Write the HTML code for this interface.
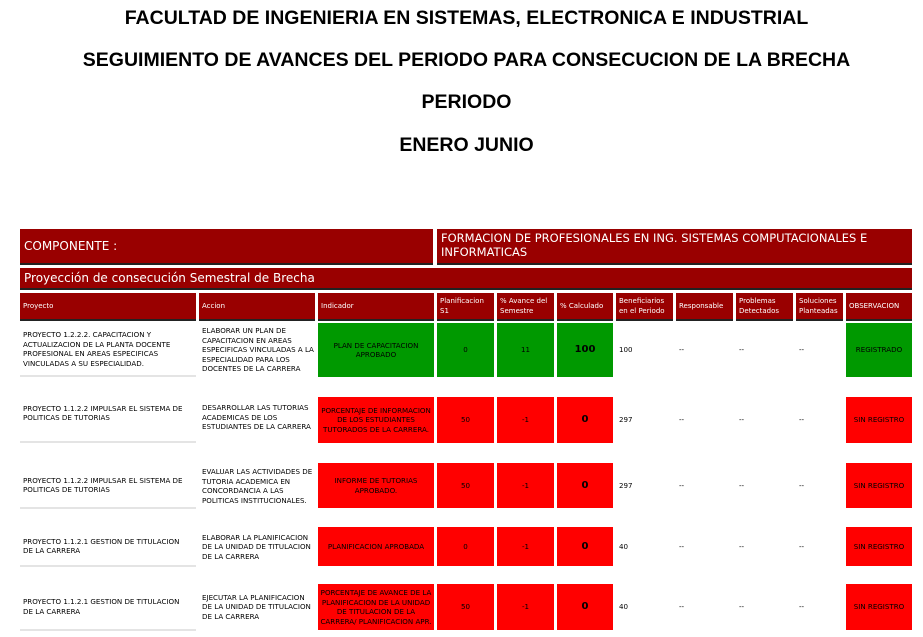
<!DOCTYPE html>
<html><head><meta charset="utf-8"><style>
body{margin:0;width:923px;height:637px;background:#fff;position:relative;overflow:hidden;font-family:"DejaVu Sans","Liberation Sans",sans-serif;}
.t{position:absolute;left:0;width:933px;text-align:center;font:bold 19.5px "Liberation Sans",sans-serif;color:#000}
.b{position:absolute;box-sizing:border-box;}
.h{background:#990000;color:#fff;border-bottom:2px solid #222;}
.hd{font-size:7px;padding:2px 3px;display:flex;align-items:center;line-height:10px}
.c{font-size:7.1px;display:flex;align-items:center;line-height:9.5px;color:#000}
.cc{justify-content:center;text-align:center;padding:0 2px}
.g{background:#009900}.r{background:#ff0000}
.u{border-bottom:2px solid #e4e4e4}
</style></head><body>
<div class="t" style="top:7px">FACULTAD DE INGENIERIA EN SISTEMAS, ELECTRONICA E INDUSTRIAL</div>
<div class="t" style="top:49px">SEGUIMIENTO DE AVANCES DEL PERIODO PARA CONSECUCION DE LA BRECHA</div>
<div class="t" style="top:91px">PERIODO</div>
<div class="t" style="top:134px">ENERO JUNIO</div>

<div class="b h" style="left:20px;top:229px;width:413px;height:36px;font-size:12px;padding:0 4px;display:flex;align-items:center">COMPONENTE :</div>
<div class="b h" style="left:437px;top:229px;width:475px;height:36px;font-size:11.5px;padding:2px 4px;line-height:14px">FORMACION DE PROFESIONALES EN ING. SISTEMAS COMPUTACIONALES E<br>INFORMATICAS</div>
<div class="b h" style="left:20px;top:268px;width:892px;height:22px;font-size:12px;padding:0 4px;display:flex;align-items:center">Proyección de consecución Semestral de Brecha</div>

<div class="b h hd" style="left:20px;top:293px;width:176px;height:28px">Proyecto</div>
<div class="b h hd" style="left:199px;top:293px;width:116px;height:28px">Accion</div>
<div class="b h hd" style="left:318px;top:293px;width:116px;height:28px">Indicador</div>
<div class="b h hd" style="left:437px;top:293px;width:57px;height:28px">Planificacion S1</div>
<div class="b h hd" style="left:497px;top:293px;width:57px;height:28px">% Avance del Semestre</div>
<div class="b h hd" style="left:557px;top:293px;width:56px;height:28px">% Calculado</div>
<div class="b h hd" style="left:616px;top:293px;width:57px;height:28px">Beneficiarios en el Periodo</div>
<div class="b h hd" style="left:676px;top:293px;width:57px;height:28px">Responsable</div>
<div class="b h hd" style="left:736px;top:293px;width:57px;height:28px">Problemas Detectados</div>
<div class="b h hd" style="left:796px;top:293px;width:47px;height:28px">Soluciones Planteadas</div>
<div class="b h hd" style="left:846px;top:293px;width:66px;height:28px">OBSERVACION</div>

<div class="b c u" style="left:20px;top:323px;width:176px;height:54px;padding-left:3px">PROYECTO 1.2.2.2. CAPACITACION Y ACTUALIZACION DE LA PLANTA DOCENTE PROFESIONAL EN AREAS ESPECIFICAS VINCULADAS A SU ESPECIALIDAD.</div>
<div class="b c" style="left:199px;top:323px;width:116px;height:54px;padding-left:3px">ELABORAR UN PLAN DE CAPACITACION EN AREAS ESPECIFICAS VINCULADAS A LA ESPECIALIDAD PARA LOS DOCENTES DE LA CARRERA</div>
<div class="b c cc g" style="left:318px;top:323px;width:116px;height:54px;padding:0 12px">PLAN DE CAPACITACION APROBADO</div>
<div class="b c cc g" style="left:437px;top:323px;width:57px;height:54px">0</div>
<div class="b c cc g" style="left:497px;top:323px;width:57px;height:54px">11</div>
<div class="b c cc g" style="left:557px;top:323px;width:56px;height:54px;font-size:10px;font-weight:bold">100</div>
<div class="b c" style="left:619px;top:323px;width:54px;height:54px">100</div>
<div class="b c" style="left:679px;top:323px;width:54px;height:54px">--</div>
<div class="b c" style="left:739px;top:323px;width:54px;height:54px">--</div>
<div class="b c" style="left:799px;top:323px;width:44px;height:54px">--</div>
<div class="b c cc g" style="left:846px;top:323px;width:66px;height:54px">REGISTRADO</div>

<div class="b c u" style="left:20px;top:397px;width:176px;height:46px;padding-left:3px;padding-bottom:12px">PROYECTO 1.1.2.2 IMPULSAR EL SISTEMA DE POLITICAS DE TUTORIAS</div>
<div class="b c" style="left:199px;top:397px;width:116px;height:46px;padding-left:3px;padding-bottom:5px">DESARROLLAR LAS TUTORIAS ACADEMICAS DE LOS ESTUDIANTES DE LA CARRERA</div>
<div class="b c cc r" style="left:318px;top:397px;width:116px;height:46px">PORCENTAJE DE INFORMACION DE LOS ESTUDIANTES TUTORADOS DE LA CARRERA.</div>
<div class="b c cc r" style="left:437px;top:397px;width:57px;height:46px">50</div>
<div class="b c cc r" style="left:497px;top:397px;width:57px;height:46px">-1</div>
<div class="b c cc r" style="left:557px;top:397px;width:56px;height:46px;font-size:10px;font-weight:bold">0</div>
<div class="b c" style="left:619px;top:397px;width:54px;height:46px">297</div>
<div class="b c" style="left:679px;top:397px;width:54px;height:46px">--</div>
<div class="b c" style="left:739px;top:397px;width:54px;height:46px">--</div>
<div class="b c" style="left:799px;top:397px;width:44px;height:46px">--</div>
<div class="b c cc r" style="left:846px;top:397px;width:66px;height:46px">SIN REGISTRO</div>

<div class="b c u" style="left:20px;top:463px;width:176px;height:46px;padding-left:3px">PROYECTO 1.1.2.2 IMPULSAR EL SISTEMA DE POLITICAS DE TUTORIAS</div>
<div class="b c" style="left:199px;top:463px;width:116px;height:46px;padding-left:3px">EVALUAR LAS ACTIVIDADES DE TUTORIA ACADEMICA EN CONCORDANCIA A LAS POLITICAS INSTITUCIONALES.</div>
<div class="b c cc r" style="left:318px;top:463px;width:116px;height:45px;padding:0 14px">INFORME DE TUTORIAS APROBADO.</div>
<div class="b c cc r" style="left:437px;top:463px;width:57px;height:45px">50</div>
<div class="b c cc r" style="left:497px;top:463px;width:57px;height:45px">-1</div>
<div class="b c cc r" style="left:557px;top:463px;width:56px;height:45px;font-size:10px;font-weight:bold">0</div>
<div class="b c" style="left:619px;top:463px;width:54px;height:45px">297</div>
<div class="b c" style="left:679px;top:463px;width:54px;height:45px">--</div>
<div class="b c" style="left:739px;top:463px;width:54px;height:45px">--</div>
<div class="b c" style="left:799px;top:463px;width:44px;height:45px">--</div>
<div class="b c cc r" style="left:846px;top:463px;width:66px;height:45px">SIN REGISTRO</div>

<div class="b c u" style="left:20px;top:527px;width:176px;height:40px;padding-left:3px;padding-right:12px">PROYECTO 1.1.2.1 GESTION DE TITULACION DE LA CARRERA</div>
<div class="b c" style="left:199px;top:527px;width:116px;height:40px;padding-left:3px">ELABORAR LA PLANIFICACION DE LA UNIDAD DE TITULACION DE LA CARRERA</div>
<div class="b c cc r" style="left:318px;top:527px;width:116px;height:39px">PLANIFICACION APROBADA</div>
<div class="b c cc r" style="left:437px;top:527px;width:57px;height:39px">0</div>
<div class="b c cc r" style="left:497px;top:527px;width:57px;height:39px">-1</div>
<div class="b c cc r" style="left:557px;top:527px;width:56px;height:39px;font-size:10px;font-weight:bold">0</div>
<div class="b c" style="left:619px;top:527px;width:54px;height:39px">40</div>
<div class="b c" style="left:679px;top:527px;width:54px;height:39px">--</div>
<div class="b c" style="left:739px;top:527px;width:54px;height:39px">--</div>
<div class="b c" style="left:799px;top:527px;width:44px;height:39px">--</div>
<div class="b c cc r" style="left:846px;top:527px;width:66px;height:39px">SIN REGISTRO</div>

<div class="b c u" style="left:20px;top:584px;width:176px;height:47px;padding-left:3px;padding-right:12px">PROYECTO 1.1.2.1 GESTION DE TITULACION DE LA CARRERA</div>
<div class="b c" style="left:199px;top:584px;width:116px;height:46px;padding-left:3px">EJECUTAR LA PLANIFICACION DE LA UNIDAD DE TITULACION DE LA CARRERA</div>
<div class="b c cc r" style="left:318px;top:584px;width:116px;height:46px">PORCENTAJE DE AVANCE DE LA PLANIFICACION DE LA UNIDAD DE TITULACION DE LA CARRERA/ PLANIFICACION APR.</div>
<div class="b c cc r" style="left:437px;top:584px;width:57px;height:46px">50</div>
<div class="b c cc r" style="left:497px;top:584px;width:57px;height:46px">-1</div>
<div class="b c cc r" style="left:557px;top:584px;width:56px;height:46px;font-size:10px;font-weight:bold">0</div>
<div class="b c" style="left:619px;top:584px;width:54px;height:46px">40</div>
<div class="b c" style="left:679px;top:584px;width:54px;height:46px">--</div>
<div class="b c" style="left:739px;top:584px;width:54px;height:46px">--</div>
<div class="b c" style="left:799px;top:584px;width:44px;height:46px">--</div>
<div class="b c cc r" style="left:846px;top:584px;width:66px;height:46px">SIN REGISTRO</div>
</body></html>
